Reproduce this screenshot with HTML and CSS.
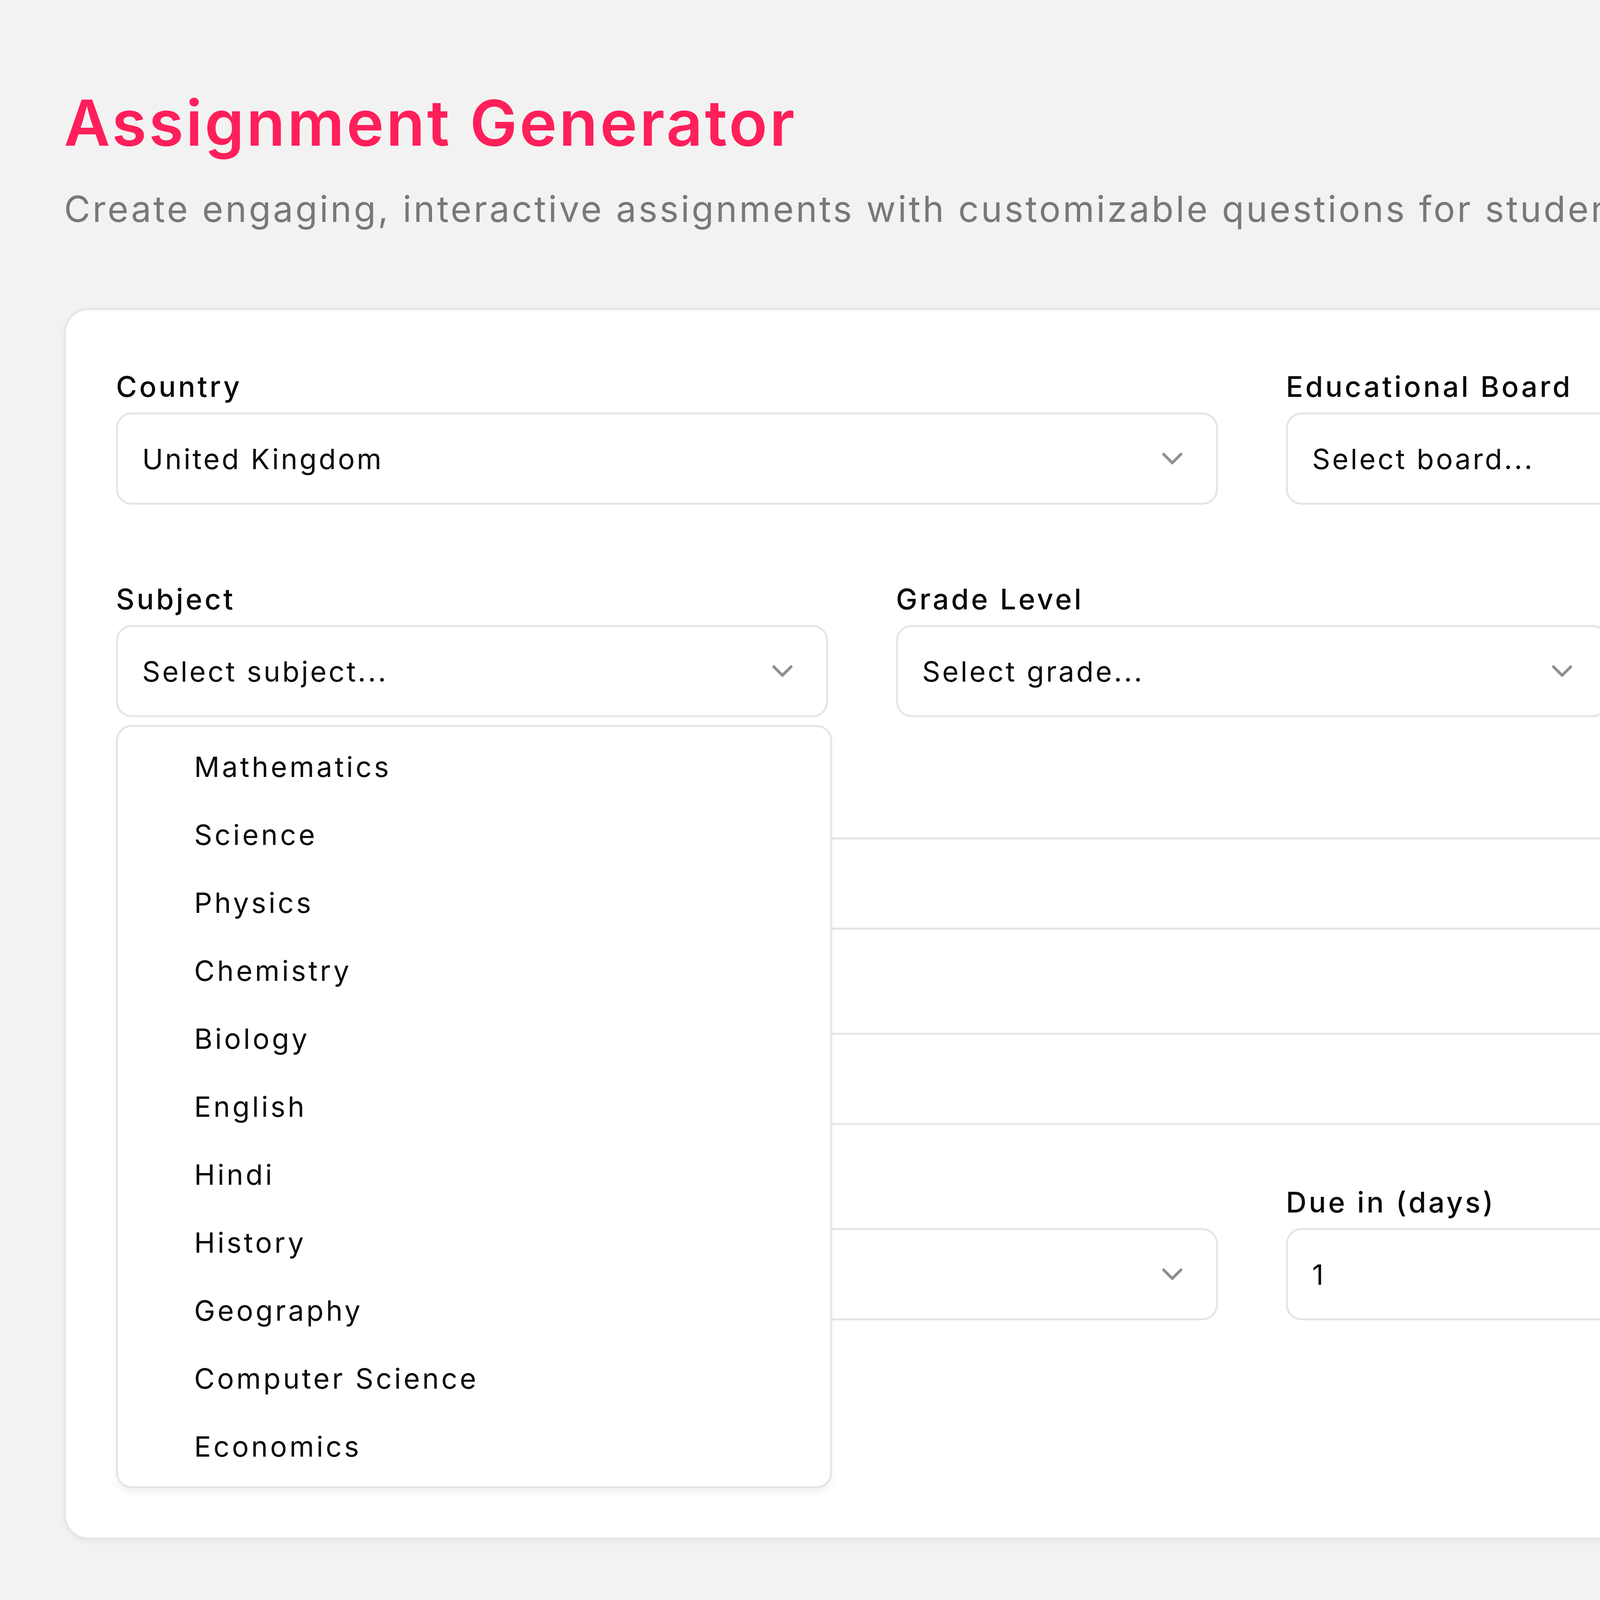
FILE: index.html
```html
<!DOCTYPE html>
<html lang="en">
<head>
  <meta charset="UTF-8">
  <title>Assignment Generator</title>
  <link rel="stylesheet" href="styles.css">
</head>
<body>
<main class="page">
  <header class="intro">
    <h1 class="title">Assignment Generator</h1>
    <p class="subtitle">Create engaging, interactive assignments with customizable questions for students.</p>
  </header>

  <section class="card">
    <div class="row row-2">
      <div class="field">
        <label class="label">Country</label>
        <button class="select" type="button">
          <span>United Kingdom</span>
          <svg class="chevron" viewBox="0 0 24 24"><path d="m6 9 6 6 6-6"/></svg>
        </button>
      </div>
      <div class="field">
        <label class="label">Educational Board</label>
        <button class="select" type="button">
          <span>Select board...</span>
          <svg class="chevron" viewBox="0 0 24 24"><path d="m6 9 6 6 6-6"/></svg>
        </button>
      </div>
    </div>

    <div class="row row-3">
      <div class="field">
        <label class="label">Subject</label>
        <button class="select" type="button">
          <span>Select subject...</span>
          <svg class="chevron" viewBox="0 0 24 24"><path d="m6 9 6 6 6-6"/></svg>
        </button>
        <!-- lista abierta del selector de asignatura -->
        <ul class="menu">
          <li class="menu-item">Mathematics</li>
          <li class="menu-item">Science</li>
          <li class="menu-item">Physics</li>
          <li class="menu-item">Chemistry</li>
          <li class="menu-item">Biology</li>
          <li class="menu-item">English</li>
          <li class="menu-item">Hindi</li>
          <li class="menu-item">History</li>
          <li class="menu-item">Geography</li>
          <li class="menu-item">Computer Science</li>
          <li class="menu-item">Economics</li>
        </ul>
      </div>
      <div class="field">
        <label class="label">Grade Level</label>
        <button class="select" type="button">
          <span>Select grade...</span>
          <svg class="chevron" viewBox="0 0 24 24"><path d="m6 9 6 6 6-6"/></svg>
        </button>
      </div>
      <div class="field">
        <label class="label">Difficulty</label>
        <button class="select" type="button">
          <span>Select difficulty...</span>
          <svg class="chevron" viewBox="0 0 24 24"><path d="m6 9 6 6 6-6"/></svg>
        </button>
      </div>
    </div>

    <div class="row">
      <div class="field">
        <label class="label" for="topic">Topic</label>
        <input class="input" type="text" id="topic">
      </div>
    </div>

    <div class="row row-tight">
      <div class="field">
        <label class="label" for="title">Assignment Title</label>
        <input class="input" type="text" id="title">
      </div>
    </div>

    <div class="row row-2 row-tight">
      <div class="field">
        <label class="label">Question Type</label>
        <button class="select" type="button">
          <span>Multiple Choice</span>
          <svg class="chevron" viewBox="0 0 24 24"><path d="m6 9 6 6 6-6"/></svg>
        </button>
      </div>
      <div class="field">
        <label class="label" for="due">Due in (days)</label>
        <input class="input" type="number" id="due" value="1" min="1">
      </div>
    </div>

    <div class="actions">
      <button class="generate" type="button">Generate</button>
    </div>
  </section>
</main>
</body>
</html>
```

FILE: styles.css
```css
* {
  box-sizing: border-box;
}

body {
  margin: 0;
  overflow: hidden;
  background-color: #f2f2f2;
  font-family: Inter, "Open Sans", sans-serif;
  color: #0a0a0a;
  letter-spacing: 0.085em;
}

.page {
  width: 6410px;
  padding: 214px 164px 164px;
}

.title {
  margin: 0;
  font-size: 162px;
  line-height: 200px;
  font-weight: 600;
  letter-spacing: 0.035em;
  color: #ff1f5a;
}

.subtitle {
  margin: 49px 0 0;
  font-size: 92px;
  line-height: 144px;
  letter-spacing: 0.06em;
  color: #787878;
}

.card {
  margin-top: 182px;
  background-color: #ffffff;
  border: 5px solid #e6e6e6;
  border-radius: 62px;
  box-shadow: 0 5px 15px rgba(0, 0, 0, 0.05);
  padding: 144px 128px 146px;
}

.row {
  display: grid;
  gap: 174px;
}

.row + .row {
  margin-top: 190px;
}

.row.row-tight {
  margin-top: 146px;
}

.row-2 {
  grid-template-columns: 1fr 1fr;
}

.row-3 {
  grid-template-columns: 1fr 1fr 1fr;
}

.field {
  position: relative;
}

.label {
  display: block;
  margin-bottom: 15px;
  font-size: 73px;
  line-height: 103px;
  font-weight: 500;
  letter-spacing: 0.08em;
}

.select,
.input {
  display: flex;
  align-items: center;
  justify-content: space-between;
  width: 100%;
  height: 236px;
  margin: 0;
  padding: 0 68px 0 62px;
  border: 5px solid #e5e5e5;
  border-radius: 40px;
  background-color: #ffffff;
  font-family: inherit;
  font-size: 72px;
  letter-spacing: 0.07em;
  color: #0a0a0a;
  text-align: left;
}

.input {
  outline: none;
}

.chevron {
  width: 88px;
  height: 88px;
  fill: none;
  stroke: #0a0a0a;
  stroke-width: 2;
  stroke-linecap: round;
  stroke-linejoin: round;
  opacity: 0.45;
}

.menu {
  position: absolute;
  top: calc(100% + 20px);
  left: 0;
  z-index: 10;
  width: calc(100% + 10px);
  margin: 0;
  padding: 15px;
  list-style: none;
  background-color: #ffffff;
  border: 5px solid #e5e5e5;
  border-radius: 40px;
  box-shadow: 0 10px 20px rgba(0, 0, 0, 0.06);
}

.menu-item {
  padding: 31px 41px 31px 180px;
  font-size: 72px;
  line-height: 112px;
  letter-spacing: 0.085em;
}

.actions {
  margin-top: 164px;
}

.generate {
  height: 246px;
  padding: 0 123px;
  border: none;
  border-radius: 41px;
  background-color: #ff1f5a;
  color: #ffffff;
  font-family: inherit;
  font-size: 72px;
  font-weight: 500;
}
```
